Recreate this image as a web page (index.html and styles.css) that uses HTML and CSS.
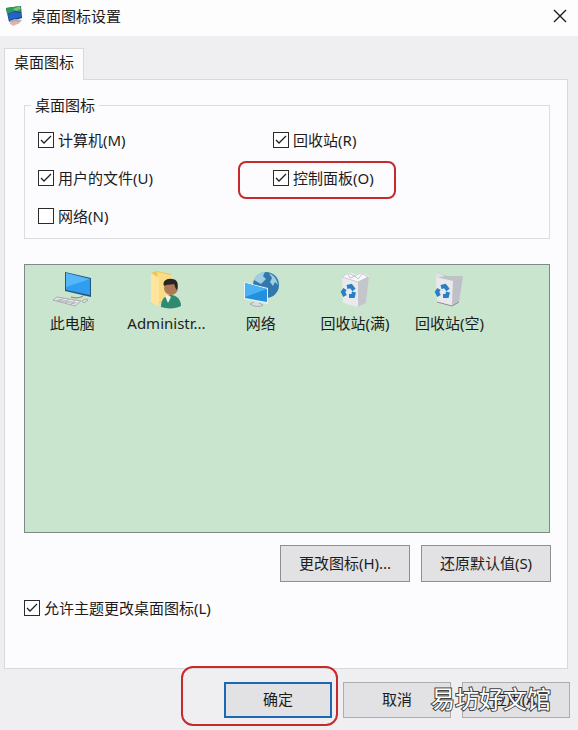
FILE: index.html
```html
<!DOCTYPE html>
<html lang="zh-CN">
<head>
<meta charset="utf-8">
<title>桌面图标设置</title>
<link rel="stylesheet" href="styles.css">
</head>
<body>
<main class="dialog">
  <header class="titlebar">
    <svg class="app-icon" viewBox="0 0 20 22" aria-hidden="true">
      <path d="m1 3 15-2 1 12-13 4z" fill="#17457e"/>
      <path d="m1 3 14-2 1 6-6-1-8 3z" fill="#2f9b58"/>
      <path d="m3 9 6-2 7 1v4L4 15z" fill="#2563c9"/>
      <path d="m8 4 7-3 1 3-5 2z" fill="#75c66b"/>
      <path d="m4 16 6-2 7 1-3 3-7 1z" fill="#a9b0c6"/>
      <path d="m4 18 7-2 4 2-7 3z" fill="#e4b3a2"/>
    </svg>
    <h1 class="title">桌面图标设置</h1>
    <button class="close" type="button" aria-label="关闭">
      <svg viewBox="0 0 14 14" aria-hidden="true"><path d="m1 1 12 12M13 1 1 13" fill="none" stroke="#1c1c1c" stroke-width="1.4"/></svg>
    </button>
  </header>

  <form class="body">
    <div class="tabs" role="tablist">
      <button class="tab" type="button" role="tab" aria-selected="true">桌面图标</button>
    </div>
    <section class="panel">
      <fieldset class="group">
        <legend>桌面图标</legend>
        <div class="options">
          <label class="check"><input type="checkbox" checked>计算机(M)</label>
          <label class="check"><input type="checkbox" checked>回收站(R)</label>
          <label class="check"><input type="checkbox" checked>用户的文件(U)</label>
          <label class="check marked"><input type="checkbox" checked>控制面板(O)</label>
          <label class="check"><input type="checkbox">网络(N)</label>
        </div>
      </fieldset>

      <ul class="icons">
        <li class="item">
          <svg viewBox="0 0 40 38" aria-hidden="true">
            <path d="m13 1 26 6v19l-26-6z" fill="#24557f"/>
            <path d="m14 2 24 6v16l-24-5z" fill="#2f9df0"/>
            <path d="m14 2 24 6-24 8z" fill="#55b7f7"/>
            <path d="m5 26 24 4-6 5-22-6z" fill="#e9e8ec" stroke="#8f939c" stroke-width=".7"/>
            <path d="m6 28 19 4M4 29l19 4M11 27l-4 4M17 28l-4 4M23 29l-4 5" stroke="#9a9ca5" stroke-width=".6"/>
            <path d="M19 26c7 2 11 0 13-2" fill="none" stroke="#a56d68"/>
            <path d="m30 30 4-2 2 1-4 3z" fill="#e2e3e9" stroke="#85858f" stroke-width=".6"/>
          </svg>
          <span>此电脑</span>
        </li>
        <li class="item">
          <svg viewBox="0 0 40 38" aria-hidden="true">
            <path d="m5 2 6-2 14 3v27L5 33z" fill="#efc35c"/>
            <path d="m11 1 14 3-1 25-11 2z" fill="#f9dc86"/>
            <path d="m5 2 8 5v28l-8-3z" fill="#ffe59b"/>
            <path d="M15 36c0-8 4-12 10-12s10 5 10 11c-5 3-14 3-20 1z" fill="#2f8a70"/>
            <path d="m19 25 3 7 3-6-3-2z" fill="#e8f1ec"/>
            <circle cx="25" cy="17" r="7" fill="#ad7956"/>
            <path d="M18 15c-2-5 3-8 8-7 5 0 7 4 5 11-2-2-2-4-3-6-3 1-7 0-10 2z" fill="#282524"/>
          </svg>
          <span>Administr...</span>
        </li>
        <li class="item">
          <svg viewBox="0 0 40 38" aria-hidden="true">
            <circle cx="25" cy="14" r="13" fill="#3278ad"/>
            <path d="M13 9c2-6 7-8 11-8l-2 4 3 3-5 5zM28 2c6 3 8 7 9 12l-3-3-2 4-3-4 2-4z" fill="#9fcde2"/>
            <path d="m3 11 24 6v16L3 28z" fill="#e5f2fa"/>
            <path d="m4 12 22 6v13L4 27z" fill="#248fdd"/>
            <path d="m4 12 22 6L4 26z" fill="#49b2f5"/>
            <path d="m13 31-4 2c4 3 11 3 13 1l-4-2" fill="#d9dde1" stroke="#8e969d" stroke-width=".7"/>
          </svg>
          <span>网络</span>
        </li>
        <li class="item">
          <svg viewBox="0 0 40 38" aria-hidden="true">
            <path d="m7 6 6-5 8 2 5-2 8 4-3 27-8 4-15-4z" fill="#e9eaed"/>
            <path d="m23 10 11-4-3 26-8 4z" fill="#c3c6cb"/>
            <path d="m7 6 6-4 6 3 7-3 7 4-10 5z" fill="#f8f8fa" stroke="#b8bbc0" stroke-width=".7"/>
            <path d="m13 3 2 4 5-2 3 3 4-5" fill="none" stroke="#b4b7bd" stroke-width=".8"/>
            <path d="m12 16 4-1 3 4M19 21l-1 4h-4M10 25l-2-4 2-3" fill="none" stroke="#287fc6" stroke-width="4"/>
          </svg>
          <span>回收站(满)</span>
        </li>
        <li class="item">
          <svg viewBox="0 0 40 38" aria-hidden="true">
            <path d="m7 1 11 4 16 0-10 5L7 7z" fill="#bec2c5"/>
            <path d="m7 1 9 4-9 2z" fill="#e0e1e5"/>
            <path d="m7 6 17 4-1 25-15-4z" fill="#e9e8ed"/>
            <path d="m24 10 10-5-4 26-7 4z" fill="#bfc0c7"/>
            <path d="m8 31 15 4 7-4" fill="none" stroke="#8e8e97"/>
            <path d="m12 16 4-1 3 4M19 21l-1 4h-4M10 25l-2-4 2-3" fill="none" stroke="#287fc6" stroke-width="4"/>
          </svg>
          <span>回收站(空)</span>
        </li>
      </ul>

      <div class="actions">
        <button class="btn large" type="button">更改图标(H)...</button>
        <button class="btn large" type="button">还原默认值(S)</button>
      </div>
      <label class="check theme"><input type="checkbox" checked>允许主题更改桌面图标(L)</label>
    </section>

    <footer class="footer">
      <span class="primary-wrap"><button class="btn primary" type="button">确定</button></span>
      <button class="btn" type="button">取消</button>
      <span class="apply-wrap"><button class="btn" type="button">应用(A)</button><span class="watermark">易坊好文馆</span></span>
    </footer>
  </form>
</main>
</body>
</html>
```
FILE: styles.css
```css
* { box-sizing: border-box; }

body {
  margin: 0;
  background: #efeef0;
  color: #1c1c1c;
  font: 15px/20px "Noto Sans", "Noto Sans CJK SC", sans-serif;
}

button, input { font: inherit; color: inherit; margin: 0; }

.dialog { min-height: 100vh; }

.titlebar {
  display: flex;
  align-items: center;
  height: 36px;
  padding: 0 11px 4px 5px;
  background: #fefdfe;
}

.app-icon { width: 20px; height: 22px; }

.title { flex: 1; margin: 0 0 0 6px; font-size: 15px; font-weight: 400; }

.close { width: 14px; height: 14px; padding: 0; border: 0; background: none; }
.close svg { display: block; }

.body { padding: 12px 10px 12px 4px; }

.tabs { display: flex; }

.tab {
  position: relative;
  z-index: 1;
  height: 32px;
  margin-bottom: -1px;
  padding: 0 9px 5px;
  border: 1px solid #d9d8db;
  border-bottom: 0;
  background: #fcfbfd;
}

.panel {
  padding: 15px 17px 50px 19px;
  border: 1px solid #d9d8db;
  background: #fcfbfd;
}

.group { margin: 0; padding: 6px 0 3px 13px; border: 1px solid #dcdbde; }
.group legend { margin-left: -7px; padding: 0 4px; }

.options { display: grid; grid-template-columns: 46% 1fr; grid-auto-rows: 38px; }

.check { position: relative; display: flex; align-items: center; gap: 4px; }

.check input {
  appearance: none;
  width: 16px;
  height: 16px;
  border: 1px solid #2b2b2b;
  background: #fff;
}

.check input:checked {
  background: #fff url("data:image/svg+xml,%3Csvg xmlns='http://www.w3.org/2000/svg' viewBox='0 0 14 14'%3E%3Cpath d='M2 7l3 3 7-7' fill='none' stroke='%23222' stroke-width='1.3'/%3E%3C/svg%3E") center / 14px 14px;
}

.marked { justify-self: start; }

.marked::after,
.primary-wrap::after {
  content: "";
  position: absolute;
  border: 2px solid #c72a2c;
  border-radius: 8px;
  pointer-events: none;
}

.marked::after { inset: 2px -22px -2px -35px; }

.icons {
  display: flex;
  flex-wrap: wrap;
  align-content: flex-start;
  min-height: 269px;
  margin: 25px 0 12px;
  padding: 6px 0;
  border: 1px solid #7f8a84;
  background: #c9e5cd;
  list-style: none;
}

.item {
  display: flex;
  flex-direction: column;
  align-items: center;
  gap: 4px;
  width: 18%;
  white-space: nowrap;
}

.item svg { width: 40px; height: 38px; }

.actions { display: flex; justify-content: flex-end; gap: 11px; margin-right: -1px; }

.btn {
  width: 108px;
  height: 36px;
  padding: 0 0 2px;
  border: 1px solid #adadaf;
  background: #e2e1e3;
}

.btn.large { width: 130px; height: 37px; border-color: #8f8e90; }

.theme { width: fit-content; margin-top: 16px; }

.footer {
  display: flex;
  justify-content: flex-end;
  gap: 11px;
  margin: 13px -2px 0 0;
}

.primary-wrap, .apply-wrap { position: relative; }
.primary-wrap::after { inset: -16px -6px -8px -43px; border-radius: 12px; }

.btn.primary { border: 2px solid #1c68b5; }

.watermark {
  position: absolute;
  top: 0;
  right: 19px;
  color: #fff;
  font-size: 24px;
  line-height: 34px;
  white-space: nowrap;
  -webkit-text-stroke: 2px #404040;
  paint-order: stroke fill;
  pointer-events: none;
}
```
